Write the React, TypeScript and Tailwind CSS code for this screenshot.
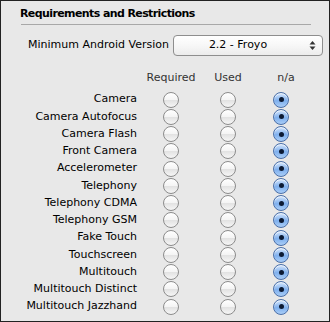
const features = [
  "Camera",
  "Camera Autofocus",
  "Camera Flash",
  "Front Camera",
  "Accelerometer",
  "Telephony",
  "Telephony CDMA",
  "Telephony GSM",
  "Fake Touch",
  "Touchscreen",
  "Multitouch",
  "Multitouch Distinct",
  "Multitouch Jazzhand",
]

function Radio({ checked }: { checked?: boolean }) {
  if (checked) {
    return (
      <span className="flex h-[16px] w-[16px] items-center justify-center rounded-full border border-[#4a6fa8] bg-[linear-gradient(#d6e6fb,#7fb0ee_55%,#a9cdf7)] shadow-[inset_0_1px_1px_rgba(255,255,255,0.8)]">
        <span className="h-[5px] w-[5px] rounded-full bg-[#0c1a33]" />
      </span>
    )
  }
  return (
    <span className="block h-[16px] w-[16px] rounded-full border border-[#8c8c8c] bg-[linear-gradient(#ffffff,#f4f4f4_50%,#e2e2e2_52%,#f6f6f6)]" />
  )
}

export default function App() {
  return (
    <div
      className="h-[322px] w-[330px] overflow-hidden border border-[#222] bg-[#e8e8e8] text-[11px] text-black"
      style={{ fontFamily: '"DejaVu Sans", sans-serif' }}
    >
      <div className="pl-[19px] pt-[6px] text-[11px] font-bold leading-[14px] tracking-[-0.6px]">
        Requirements and Restrictions
      </div>
      <div className="ml-[20px] mt-[3px] h-px w-[290px] bg-[#a8a8a8]" />

      <div className="mt-[10px] flex items-center pl-[27px] pr-[6px]">
        <span>Minimum Android Version</span>
        <div className="ml-auto flex h-[21px] w-[150px] items-center rounded-[4px] border border-[#8e8e8e] bg-[linear-gradient(#ffffff,#f7f7f7_50%,#ececec)] pl-[8px] pr-[6px]">
          <span className="w-[112px] text-center">2.2 - Froyo</span>
          <svg className="ml-auto" width="7" height="11" viewBox="0 0 7 11">
            <path d="M3.5 1 L6.5 4.5 L0.5 4.5 Z" fill="#333" />
            <path d="M3.5 10 L6.5 6.5 L0.5 6.5 Z" fill="#333" />
          </svg>
        </div>
      </div>

      <div className="mt-[14px] grid grid-cols-[140px_60px_54px_52px] text-[11px]">
        <div />
        <div className="h-[21px] text-center text-[#333]">Required</div>
        <div className="h-[21px] text-center text-[#333]">Used</div>
        <div className="h-[21px] pl-[10px] text-center text-[#333]">n/a</div>
        {features.map((f) => (
          <div key={f} className="contents">
            <div className="flex h-[17.25px] items-center justify-end pr-[4px]">{f}</div>
            <div className="flex items-center justify-center">
              <Radio />
            </div>
            <div className="flex items-center justify-center">
              <Radio />
            </div>
            <div className="flex items-center justify-center">
              <Radio checked />
            </div>
          </div>
        ))}
      </div>
    </div>
  )
}
